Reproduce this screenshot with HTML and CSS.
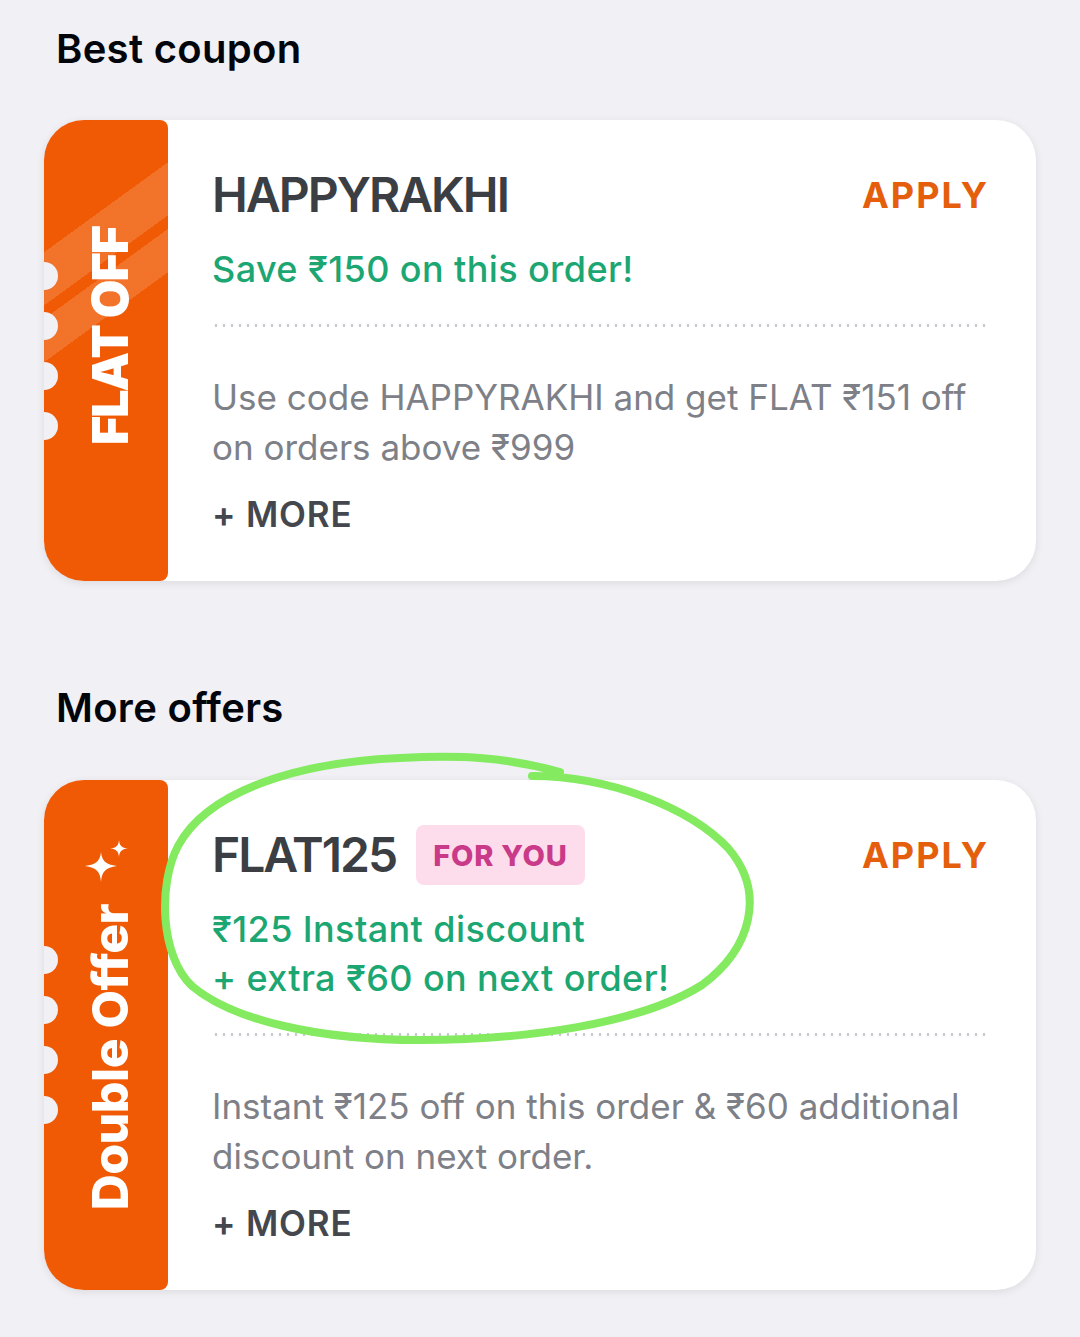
FILE: index.html
```html
<!DOCTYPE html>
<html lang="en">
<head>
<meta charset="utf-8">
<title>Coupons</title>
<link rel="stylesheet" href="styles.css">
</head>
<body>
<main class="page">
  <h2 class="section-title">Best coupon</h2>
  <div class="coupon">
    <div class="strip strip-striped">
      <span class="strip-label">FLAT OFF</span>
    </div>
    <div class="notches"><i></i><i></i><i></i><i></i></div>
    <div class="coupon-body">
      <div class="coupon-head">
        <div class="code-row"><span class="code">HAPPYRAKHI</span></div>
        <span class="apply">APPLY</span>
      </div>
      <p class="benefit">Save ₹150 on this order!</p>
      <div class="divider"></div>
      <p class="desc">Use code HAPPYRAKHI and get FLAT ₹151 off on orders above ₹999</p>
      <p class="more">+ MORE</p>
    </div>
  </div>

  <h2 class="section-title section-gap">More offers</h2>
  <div class="coupon">
    <div class="strip">
      <svg class="sparkle" width="46" height="48" viewBox="0 0 46 48" aria-hidden="true">
        <path d="M16 16 C16.8 24.5 20.5 28.5 32 30 C20.5 31.5 16.8 35.5 16 46 C15.2 35.5 11.5 31.5 0 30 C11.5 28.5 15.2 24.5 16 16 Z" fill="#fff"/>
        <path d="M34 4 C34.5 9.5 36.5 11.8 43 12.5 C36.5 13.2 34.5 15.5 34 21 C33.5 15.5 31.5 13.2 25 12.5 C31.5 11.8 33.5 9.5 34 4 Z" fill="#fff"/>
      </svg>
      <span class="strip-label strip-label-mixed">Double Offer</span>
    </div>
    <div class="notches"><i></i><i></i><i></i><i></i></div>
    <div class="coupon-body">
      <div class="coupon-head">
        <div class="code-row"><span class="code">FLAT125</span><span class="badge">FOR YOU</span></div>
        <span class="apply">APPLY</span>
      </div>
      <p class="benefit">₹125 Instant discount<br>+ extra ₹60 on next order!</p>
      <div class="divider"></div>
      <p class="desc">Instant ₹125 off on this order &amp; ₹60 additional discount on next order.</p>
      <p class="more">+ MORE</p>
    </div>
  </div>
</main>
<svg class="annotation" width="1080" height="1337" viewBox="0 0 1080 1337" aria-hidden="true">
  <path d="M532 776 C610 776 690 808 728 848 C766 892 752 948 702 985 C640 1024 525 1040 420 1040 C318 1040 232 1020 192 986 C160 956 158 884 178 846 C208 790 300 762 400 758 C462 755 505 757 560 772" fill="none" stroke="#84ea60" stroke-width="8" stroke-linecap="round" stroke-linejoin="round"/>
</svg>
</body>
</html>
```
FILE: styles.css
```css
* { box-sizing: border-box; }

html, body {
  margin: 0;
  padding: 0;
  background: #f0f0f5;
}

body {
  position: relative;
  font-family: Inter, "Noto Sans", "Liberation Sans", sans-serif;
  color: #02060c;
}

.page {
  padding: 25px 44px 40px 44px;
}

.section-title {
  margin: 0 0 47px 12px;
  font-size: 40px;
  line-height: 48px;
  font-weight: 600;
  letter-spacing: 0.3px;
  color: #02060c;
}

.section-gap {
  margin-top: 103px;
  margin-bottom: 48px;
}

.coupon {
  position: relative;
  display: flex;
  background: #fff;
  border-radius: 40px;
  overflow: hidden;
  box-shadow: 0 2px 8px rgba(0, 0, 0, 0.09);
}

.strip {
  flex: 0 0 124px;
  background: #f05a05;
  border-radius: 0 8px 8px 0;
  display: flex;
  flex-direction: column;
  align-items: center;
  justify-content: center;
  padding: 0 0 28px 8px;
  gap: 20px;
}

.strip-striped {
  background:
    linear-gradient(144deg,
      transparent 107px,
      rgba(255, 255, 255, 0.15) 107px,
      rgba(255, 255, 255, 0.15) 150px,
      transparent 150px,
      transparent 161px,
      rgba(255, 255, 255, 0.15) 161px,
      rgba(255, 255, 255, 0.15) 196px,
      transparent 196px),
    #f05a05;
}

.strip-label {
  writing-mode: vertical-rl;
  transform: rotate(180deg);
  color: #fff;
  font-weight: 900;
  font-size: 50px;
  line-height: 1;
  letter-spacing: -2px;
  white-space: nowrap;
}

.strip-label-mixed {
  font-weight: 800;
  letter-spacing: -0.6px;
}

.sparkle {
  display: block;
  margin-left: -4px;
  margin-top: 4px;
}

.notches {
  position: absolute;
  left: -14px;
  top: 50%;
  transform: translateY(-50%);
  display: flex;
  flex-direction: column;
  gap: 22px;
}

.notches i {
  display: block;
  width: 28px;
  height: 28px;
  border-radius: 50%;
  background: #f0f0f5;
}

.coupon-body {
  flex: 1;
  padding: 45px 47px 45px 44px;
}

.coupon-head {
  display: flex;
  align-items: center;
  justify-content: space-between;
  height: 60px;
}

.code-row {
  display: flex;
  align-items: center;
  gap: 20px;
}

.code {
  font-size: 48px;
  line-height: 56px;
  font-weight: 600;
  letter-spacing: -2px;
  color: #3b3e43;
}

.badge {
  display: inline-flex;
  align-items: center;
  height: 60px;
  padding: 0 17px;
  border-radius: 8px;
  background: #fddcec;
  color: #c93a88;
  font-size: 29px;
  font-weight: 800;
  letter-spacing: 0.8px;
}

.apply {
  font-size: 36px;
  line-height: 60px;
  font-weight: 700;
  letter-spacing: 2px;
  color: #e45e0c;
}

.benefit {
  margin: 20px 0 0 0;
  font-size: 36px;
  line-height: 49px;
  font-weight: 500;
  color: #1ba672;
  letter-spacing: 0.4px;
}

.divider {
  margin: 30px 0 45px 0;
  height: 3px;
  background-image: radial-gradient(circle, #c9cacf 1.2px, transparent 1.6px);
  background-size: 8px 3px;
  background-repeat: repeat-x;
}

.desc {
  margin: 0;
  font-size: 35px;
  line-height: 50px;
  font-weight: 400;
  color: #7e8088;
  letter-spacing: 0;
}

.more {
  margin: 20px 0 0 0;
  font-size: 35px;
  line-height: 44px;
  font-weight: 600;
  letter-spacing: 0.8px;
  color: #44474d;
}

.annotation {
  position: absolute;
  top: 0;
  left: 0;
  pointer-events: none;
}
```
